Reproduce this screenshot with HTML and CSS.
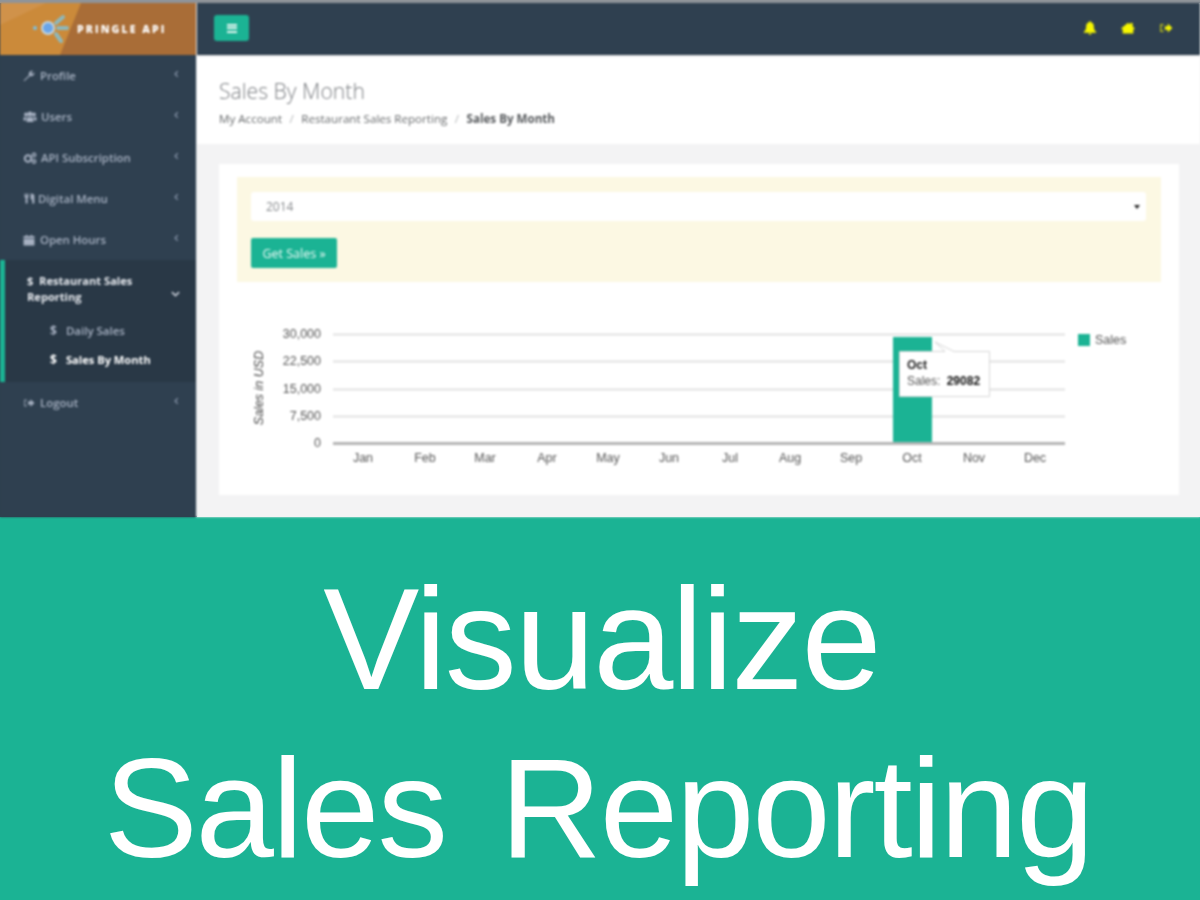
FILE: index.html
```html
<!DOCTYPE html>
<html lang="en">
<head>
<meta charset="utf-8">
<title>Visualize Sales Reporting</title>
<link rel="stylesheet" href="styles.css">
</head>
<body>
<svg class="sprite" aria-hidden="true">
  <symbol id="i-wrench" viewBox="0 0 12 12"><path d="M1.200 11.300 .6 10.600 6 5.200C5.500 3.600 6 2 7.400 1.200 8.300.7 9.300.7 10 .9L8.300 2.700 8.700 3.700 9.700 4 11.300 2.300C11.600 3.300 11.300 4.600 10.300 5.400 9.300 6.200 8 6.300 7 5.900Z"/></symbol>
  <symbol id="i-users" viewBox="0 0 14 12"><circle cx="3" cy="3.500" r="2"/><circle cx="11" cy="3.500" r="2"/><circle cx="7" cy="3" r="2.500"/><path d="M.5 6.300H3.500L3 9.500H.5ZM10.500 6.300H13.500V9.500H11ZM4 6.200H10L10.500 11H3.500Z"/></symbol>
  <symbol id="i-cogs" viewBox="0 0 14 12"><circle cx="5" cy="6.500" r="3.200" fill="none" stroke="currentColor" stroke-width="2"/><circle cx="11" cy="3" r="1.700" fill="none" stroke="currentColor" stroke-width="1.400"/><circle cx="11" cy="9.500" r="1.700" fill="none" stroke="currentColor" stroke-width="1.400"/></symbol>
  <symbol id="i-food" viewBox="0 0 12 12"><path d="M.5 .5H1.600V3H2.300V.5H3.200V3H3.900V.5H5V4.300L3.900 5.200V11.500H1.700V5.200L.5 4.300ZM7.200.5C10 .5 11.300 1.500 11.300 3V11.500H8.900V7H7.200Z"/></symbol>
  <symbol id="i-cal" viewBox="0 0 12 12"><path d="M.5 2H3V.7H4.200V2H7.800V.7H9V2H11.500V4.200H.5ZM.5 5H11.500V11.500H.5Z"/></symbol>
  <symbol id="i-out" viewBox="0 0 12 12"><path d="M1 2.500H4V3.700H2.200V8.300H4V9.500H1Z" opacity=".7"/><path d="M5 4.500H7.500V2.200L11.500 6 7.500 9.800V7.500H5Z"/></symbol>
  <symbol id="i-bell" viewBox="0 0 12 12"><path d="M6 .3C6.500.3 6.800.7 6.800 1.100 8.500 1.500 9.300 2.800 9.300 4.500 9.300 7 10 8.300 11.300 9.300V10H.7V9.300C2 8.300 2.700 7 2.700 4.500 2.700 2.800 3.500 1.500 5.200 1.100 5.200.7 5.500.3 6 .3ZM4.800 10.500H7.200C7.200 11.300 6.700 11.800 6 11.800S4.800 11.300 4.800 10.500Z"/></symbol>
  <symbol id="i-home" viewBox="0 0 12 12"><path d="M.2 6.300 6 1.500 7.800 3V1.800H10V4.800L11.800 6.300 11 7.200 10.600 6.800V10.800H1.400V6.800L1 7.200Z"/></symbol>
  <symbol id="i-left" viewBox="0 0 6 10"><path d="M4.500 1.500 1.200 5 4.500 8.500" fill="none" stroke="currentColor" stroke-width="1.600"/></symbol>
  <symbol id="i-down" viewBox="0 0 10 6"><path d="M1 1 5 4.800 9 1" fill="none" stroke="currentColor" stroke-width="1.800"/></symbol>
</svg>

<div class="shot-wrap">
<section class="shot">
  <aside class="side">
    <div class="brand">
      <svg class="brand-art" viewBox="0 0 196 52" aria-hidden="true">
        <polygon points="0,0 81,0 60,52 0,52" fill="#cb8a3a"/>
        <polygon points="0,0 46,0 0,22" fill="#d0924a"/>
        <circle cx="48" cy="25" r="6" fill="#6aa5e8" stroke="#c6d6dc" stroke-width="2"/>
        <circle cx="35" cy="25" r="2" fill="#7cc0e0"/>
        <path d="M56 20 63 14M58 25H67M56 31 61 38" stroke="#8db8bc" stroke-width="4" stroke-linecap="round" fill="none"/>
      </svg>
      <span class="brand-name">PRINGLE API</span>
    </div>
    <nav class="nav">
      <a class="item"><svg class="ic"><use href="#i-wrench"/></svg><span class="lbl">Profile</span><svg class="chev"><use href="#i-left"/></svg></a>
      <a class="item"><svg class="ic ic-w"><use href="#i-users"/></svg><span class="lbl">Users</span><svg class="chev"><use href="#i-left"/></svg></a>
      <a class="item"><svg class="ic ic-w"><use href="#i-cogs"/></svg><span class="lbl">API Subscription</span><svg class="chev"><use href="#i-left"/></svg></a>
      <a class="item"><svg class="ic ic-n"><use href="#i-food"/></svg><span class="lbl">Digital Menu</span><svg class="chev"><use href="#i-left"/></svg></a>
      <a class="item"><svg class="ic"><use href="#i-cal"/></svg><span class="lbl">Open Hours</span><svg class="chev"><use href="#i-left"/></svg></a>
      <div class="group">
        <a class="group-head"><span class="lbl-strong">$&nbsp; Restaurant Sales Reporting</span><svg class="chev-d"><use href="#i-down"/></svg></a>
        <a class="sub"><span class="dollar">$</span>Daily Sales</a>
        <a class="sub sub-on"><span class="dollar">$</span>Sales By Month</a>
      </div>
      <a class="item"><svg class="ic"><use href="#i-out"/></svg><span class="lbl">Logout</span><svg class="chev"><use href="#i-left"/></svg></a>
    </nav>
  </aside>
  <div class="main">
    <header class="topbar">
      <button class="burger" aria-label="Menu"><span></span><span></span><span></span></button>
      <div class="top-icons">
        <svg class="ti"><use href="#i-bell"/></svg>
        <svg class="ti"><use href="#i-home"/></svg>
        <svg class="ti"><use href="#i-out"/></svg>
      </div>
    </header>
    <div class="page-head">
      <h1 class="title">Sales By Month</h1>
      <ol class="crumbs">
        <li>My Account</li>
        <li class="sep">/</li>
        <li>Restaurant Sales Reporting</li>
        <li class="sep">/</li>
        <li class="here">Sales By Month</li>
      </ol>
    </div>
    <div class="content">
      <div class="card">
        <form class="filter">
          <div class="select"><span>2014</span><i class="caret"></i></div>
          <div class="btn">Get Sales »</div>
        </form>
        <svg class="chart" viewBox="0 0 960 210" role="img" aria-label="Sales by month chart">
          <g class="grid">
            <line x1="114" x2="846" y1="49.500" y2="49.500"/>
            <line x1="114" x2="846" y1="76.500" y2="76.500"/>
            <line x1="114" x2="846" y1="104.500" y2="104.500"/>
            <line x1="114" x2="846" y1="131.500" y2="131.500"/>
          </g>
          <rect class="bar" x="674" y="52" width="39" height="107"/>
          <line class="axis" x1="114" x2="846" y1="158.500" y2="158.500"/>
          <g class="ylab">
            <text x="102" y="53">30,000</text>
            <text x="102" y="80">22,500</text>
            <text x="102" y="108">15,000</text>
            <text x="102" y="135">7,500</text>
            <text x="102" y="162">0</text>
          </g>
          <text class="ytitle" transform="translate(44 103) rotate(-90)">Sales in USD</text>
          <g class="xlab">
            <text x="144" y="177">Jan</text><text x="206" y="177">Feb</text><text x="266" y="177">Mar</text>
            <text x="328" y="177">Apr</text><text x="389" y="177">May</text><text x="450" y="177">Jun</text>
            <text x="511" y="177">Jul</text><text x="571" y="177">Aug</text><text x="632" y="177">Sep</text>
            <text x="693" y="177">Oct</text><text x="755" y="177">Nov</text><text x="816" y="177">Dec</text>
          </g>
          <rect class="bar" x="859" y="49" width="12" height="12"/>
          <text class="legend" x="876" y="59">Sales</text>
          <path class="tip" d="M683.500 66.500H726L716 57 735 66.500H770.500V111.500H680.500V66.500Z"/>
          <text class="tip-h" x="688" y="84">Oct</text>
          <text class="tip-t" x="688" y="100">Sales: <tspan class="tip-v" dx="3">29082</tspan></text>
        </svg>
      </div>
    </div>
  </div>
</section>
</div>
<section class="banner">
  <p class="banner-text"><span class="line-1">Visualize</span><span class="line-2">Sales Reporting</span></p>
</section>
</body>
</html>
```
FILE: styles.css
```css
* { box-sizing: border-box; }
html, body { margin: 0; padding: 0; }
body { width: 1200px; height: 900px; overflow: hidden; background: #1bb394; font-family: "Open Sans", "Liberation Sans", sans-serif; }
.sprite { display: none; }

.shot-wrap { height: 517px; background: linear-gradient(#8f9499, #8f9499) top / 100% 3px no-repeat, linear-gradient(90deg, #2f4050 197px, #f3f3f4 197px); }
.shot { height: 517px; display: flex; border-top: 3px solid #8f9499; background: #f3f3f4; filter: blur(.8px); }

.side { width: 197px; flex: none; background: #2f4050; border-right: 1px solid #e6e8ea; display: flex; flex-direction: column; }
.brand { height: 52px; flex: none; background: #a96d37; display: flex; align-items: center; position: relative; }
.brand-art { position: absolute; left: 0; top: 0; width: 196px; height: 52px; }
.brand-name { position: relative; margin-left: 77px; font: 800 10.500px "Open Sans", sans-serif; letter-spacing: 2.100px; color: #fff; white-space: nowrap; }

.nav { display: flex; flex-direction: column; }
.item { height: 41px; display: flex; align-items: center; padding: 0 17px 0 23px; color: #a7b1c2; font-size: 11.400px; font-weight: 600; }
.ic { width: 12px; height: 12px; fill: currentColor; margin-right: 5px; flex: none; }
.ic-w { width: 14px; margin-right: 4px; }
.ic-n { width: 11px; height: 13px; margin-left: 1px; margin-right: 3px; }
.lbl { flex: 1; white-space: nowrap; }
.chev { width: 5px; height: 8px; margin-top: -4px; color: #8391a5; flex: none; }

.group { height: 122px; background: #293846; border-left: 5px solid #1bb394; display: flex; flex-direction: column; color: #fff; }
.group-head { display: flex; align-items: center; padding: 2px 16px 0 22px; height: 56px; flex: none; }
.lbl-strong { flex: 1; font-size: 11.100px; font-weight: 700; line-height: 16px; color: #e6e9ee; }
.chev-d { width: 9px; height: 6px; margin-top: 10px; color: #c6ccd6; flex: none; }
.dollar { font-size: 12px; line-height: 1; font-weight: 700; margin-right: 6px; }
.sub { height: 29px; flex: none; display: flex; align-items: center; gap: 3px; padding-left: 45px; font-size: 11.500px; font-weight: 600; color: #a7b1c2; }
.sub-on { color: #fff; font-weight: 700; font-size: 11.150px; }

.main { flex: 1; min-width: 0; display: flex; flex-direction: column; }
.topbar { height: 52px; flex: none; background: #2f4050; display: flex; align-items: center; justify-content: space-between; padding: 0 27px 1px 17px; border-bottom: 1px solid #263441; }
.burger { width: 35px; height: 26px; padding: 0; border: 0; border-radius: 3px; background: #1bb394; display: flex; flex-direction: column; align-items: center; justify-content: center; gap: 1.500px; }
.burger span { width: 10px; height: 2px; background: #e8f7f3; }
.top-icons { display: flex; gap: 24px; color: #fafa00; }
.ti { width: 14px; height: 14px; fill: #f7f700; }

.page-head { height: 89px; flex: none; background: #fff; border-top: 2px solid #eceef0; padding: 20px 22px 0; }
.title { margin: 0; font-size: 21.200px; font-weight: 300; line-height: 28px; color: #7b7e82; }
.crumbs { list-style: none; margin: 7px 0 0; padding: 0; display: flex; gap: 7.500px; font-size: 11.600px; line-height: 14px; color: #676a6c; }
.sep { color: #b5b7b9; }
.here { font-weight: 700; color: #55585b; }

.content { flex: 1; padding: 20px 21px 22px 22px; }
.card { height: 331px; background: #fff; padding: 13px 18px 0; display: flex; flex-direction: column; }
.filter { height: 105px; flex: none; background: #fcf8e3; padding: 15px 15px 0 14px; display: flex; flex-direction: column; align-items: flex-start; }
.select { width: 100%; height: 29px; background: #fff; border-radius: 3px; display: flex; align-items: center; justify-content: space-between; padding: 0 6px 0 15px; font-size: 12px; color: #85888b; }
.caret { width: 0; height: 0; border-left: 3px solid transparent; border-right: 3px solid transparent; border-top: 4px solid #222; }
.btn { margin-top: 17px; height: 30px; width: 86px; border-radius: 2px; background: #1bb394; color: #f1fbf8; font-size: 12.500px; font-weight: 400; display: flex; align-items: center; justify-content: center; }

.chart { display: block; flex: none; width: 960px; height: 210px; margin-left: -18px; margin-top: 3px; font-family: "Liberation Sans", Arial, sans-serif; }
.grid line { stroke: #e2e2e2; stroke-width: 2; }
.axis { stroke: #b5b5b5; stroke-width: 3; }
.bar { fill: #1bb394; }
.ylab text { font-size: 12.500px; fill: #555; text-anchor: end; }
.xlab text { font-size: 12.500px; fill: #555; text-anchor: middle; }
.ytitle { font-size: 12.500px; font-style: italic; fill: #444; text-anchor: middle; }
.legend { font-size: 12.500px; fill: #555; }
.tip { fill: #fff; stroke: #d6d6d6; stroke-width: 1; }
.tip-h { font-size: 12px; font-weight: 700; fill: #222; }
.tip-t { font-size: 12px; fill: #555; }
.tip-v { font-weight: 700; fill: #111; }

.banner { height: 383px; background: #1bb394; display: flex; justify-content: center; }
.banner-text { margin: 39px 0 0; font-family: "Liberation Sans", Arial, sans-serif; line-height: 168px; color: #fff; text-align: center; white-space: nowrap; }
.line-1 { display: block; font-size: 144px; letter-spacing: -1.900px; padding-left: 3px; }
.line-2 { display: block; font-size: 141px; letter-spacing: -2.100px; word-spacing: 17px; padding-right: 4px; }
```
